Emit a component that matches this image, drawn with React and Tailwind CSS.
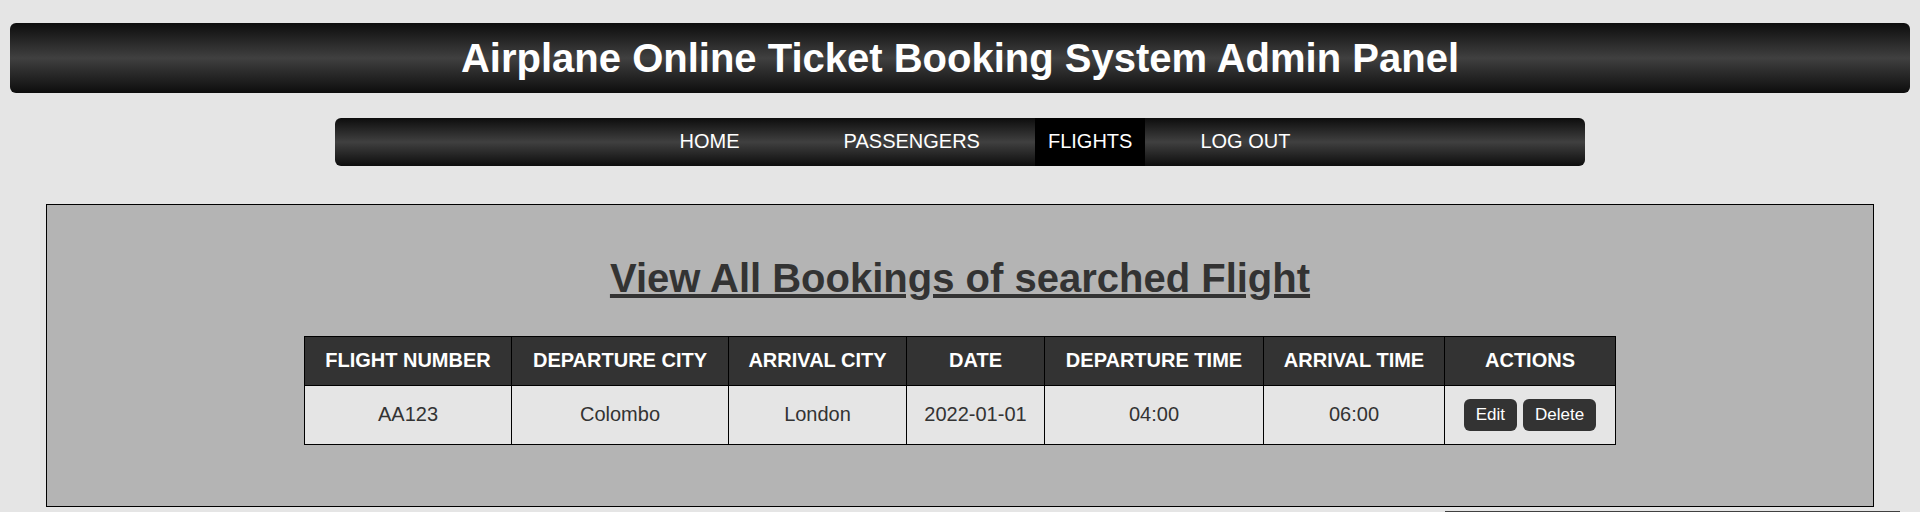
const navLinks = [
  { label: "HOME", className: "mr-9" },
  { label: "PASSENGERS", className: "" },
  { label: "FLIGHTS", className: "bg-black", current: true },
  { label: "LOG OUT", className: "" },
];

const columns = [
  { label: "FLIGHT NUMBER", width: "w-[207px]" },
  { label: "DEPARTURE CITY", width: "w-[217px]" },
  { label: "ARRIVAL CITY", width: "w-[178px]" },
  { label: "DATE", width: "w-[138px]" },
  { label: "DEPARTURE TIME", width: "w-[219px]" },
  { label: "ARRIVAL TIME", width: "w-[181px]" },
  { label: "ACTIONS", width: "w-[171px]" },
];

const flights = [["AA123", "Colombo", "London", "2022-01-01", "04:00", "06:00"]];

const barStyle = "rounded-md bg-linear-to-b/srgb from-[#0d0d0d] via-[#404040] to-[#0d0d0d] text-white";
const buttonStyle = "rounded-md bg-[#333] px-3 py-1 text-[17px] leading-6 text-white";

export default function App() {
  return (
    <div className="bg-[#e5e5e5] px-2.5 pt-[23px] font-['Liberation_Sans',Arial,sans-serif] text-xl text-[#333]">
      <header className={`${barStyle} py-3 text-center`}>
        <h1 className="text-[40px] leading-[46px] font-bold">Airplane Online Ticket Booking System Admin Panel</h1>
      </header>

      <nav className={`${barStyle} mx-auto mt-[25px] max-w-[1250px]`}>
        <ul className="flex justify-center gap-[42px] pl-[50px]">
          {navLinks.map((link) => (
            <li key={link.label} className={link.className}>
              <a href="#" aria-current={link.current ? "page" : undefined} className="block px-[13px] pt-[11px] pb-[13px] leading-6">
                {link.label}
              </a>
            </li>
          ))}
        </ul>
      </nav>

      <main className="mx-9 mt-[38px] border border-black bg-[#b4b4b4] pt-[50px] pb-[61px]">
        <h2 className="mb-[35px] text-center text-[40px] leading-[46px] font-bold underline">
          View All Bookings of searched Flight
        </h2>
        <table className="mx-auto table-fixed border-collapse text-center">
          <colgroup>
            {columns.map((column) => (
              <col key={column.label} className={column.width} />
            ))}
          </colgroup>
          <thead>
            <tr className="bg-[#333] text-white">
              {columns.map((column) => (
                <th key={column.label} className="border border-black pt-[11px] pb-[13px] leading-6 font-bold whitespace-nowrap">
                  {column.label}
                </th>
              ))}
            </tr>
          </thead>
          <tbody>
            {flights.map((flight) => (
              <tr key={flight[0]} className="bg-[#e5e5e5]">
                {flight.map((value) => (
                  <td key={value} className="border border-black pb-0.5">
                    {value}
                  </td>
                ))}
                <td className="border border-black py-[13px]">
                  <div className="flex justify-center gap-1.5">
                    <button type="button" className={buttonStyle}>Edit</button>
                    <button type="button" className={buttonStyle}>Delete</button>
                  </div>
                </td>
              </tr>
            ))}
          </tbody>
        </table>
      </main>

      <footer className="mt-1 mr-2.5 ml-auto h-px max-w-[455px] bg-[#404040]" />
    </div>
  );
}
